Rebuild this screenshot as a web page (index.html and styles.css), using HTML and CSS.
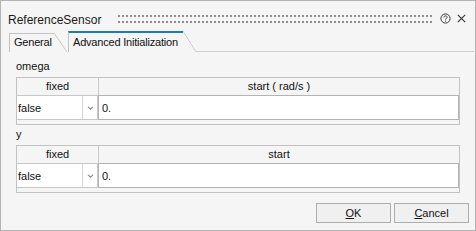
FILE: index.html
```html
<!DOCTYPE html>
<html>
<head>
<meta charset="utf-8">
<link rel="stylesheet" href="styles.css">
</head>
<body>
<div class="window">
  <div class="titlebar">
    <span class="title">ReferenceSensor</span>
    <span class="grip"></span>
    <svg class="help" width="11" height="11" viewBox="0 0 11 11"><circle cx="5.5" cy="5.5" r="4.6" fill="none" stroke="#3a3a3a" stroke-width="1"/><path d="M3.9 4.4 C3.9 3.4 4.6 2.9 5.5 2.9 C6.4 2.9 7.1 3.4 7.1 4.3 C7.1 5.3 5.6 5.4 5.6 6.7" fill="none" stroke="#3a3a3a" stroke-width="1"/><rect x="5.1" y="7.6" width="1" height="1" fill="#3a3a3a"/></svg>
    <svg class="close" width="9" height="9" viewBox="0 0 9 9"><path d="M0.8 0.8 L8.2 8.2 M8.2 0.8 L0.8 8.2" stroke="#333" stroke-width="1.1"/></svg>
  </div>
  <div class="tabbar">
    <div class="tab tab-general">General</div>
    <div class="tab tab-active">Advanced Initialization</div>
    <div class="tabfill"></div>
  </div>
  <div class="pane">
    <div class="group">
      <div class="label">omega</div>
      <div class="grid">
        <div class="thead">
          <div class="th th1">fixed</div>
          <div class="th th2">start ( rad/s )</div>
        </div>
        <div class="trow">
          <div class="combo">
            <div class="combo-text">false</div>
            <div class="combo-arrow"><svg width="7" height="4" viewBox="0 0 7 4"><polyline points="1,0.8 3.5,3.2 6,0.8" fill="none" stroke="#8a8a8a" stroke-width="1.1"/></svg></div>
          </div>
          <div class="edit">0.</div>
        </div>
      </div>
    </div>
    <div class="group group-second">
      <div class="label">y</div>
      <div class="grid">
        <div class="thead">
          <div class="th th1">fixed</div>
          <div class="th th2">start</div>
        </div>
        <div class="trow">
          <div class="combo">
            <div class="combo-text">false</div>
            <div class="combo-arrow"><svg width="7" height="4" viewBox="0 0 7 4"><polyline points="1,0.8 3.5,3.2 6,0.8" fill="none" stroke="#8a8a8a" stroke-width="1.1"/></svg></div>
          </div>
          <div class="edit">0.</div>
        </div>
      </div>
    </div>
  </div>
  <div class="buttons">
    <button class="btn"><u>O</u>K</button>
    <button class="btn"><u>C</u>ancel</button>
  </div>
</div>
</body>
</html>
```

FILE: styles.css
```css
* { box-sizing: border-box; }
html, body { margin: 0; padding: 0; }
body {
  background: #f5f5f5;
  font-family: "Liberation Sans", Arial, sans-serif;
  font-size: 11px;
  color: #111;
}
.window {
  width: 476px;
  height: 231px;
  border: 1px solid #b4b4b4;
  background: #f5f5f5;
  display: flex;
  flex-direction: column;
}
.titlebar {
  height: 30px;
  display: flex;
  align-items: flex-start;
  padding: 11px 9px 0 7px;
}
.title {
  font-size: 12px;
  line-height: 16px;
  color: #1a1a1a;
}
.grip {
  flex: 1;
  height: 8px;
  margin: 3px 8px 0 17px;
  background-image: conic-gradient(from 270deg at 2px 2px, #8e8e8e 25%, transparent 0);
  background-size: 4px 6px;
}
.help { margin-top: 1px; flex: none; }
.close { margin: 2px 0 0 6px; flex: none; }

.tabbar {
  height: 21px;
  display: flex;
  align-items: flex-end;
  padding-left: 8px;
}
.tab {
  position: relative;
  display: flex;
  align-items: flex-end;
  padding: 0 0 3px 4px;
  line-height: 13px;
  border-left: 1px solid #c3c3c3;
  border-top: 1px solid #c3c3c3;
  letter-spacing: -0.2px;
  white-space: nowrap;
  color: #111;
}
.tab::after {
  content: "";
  position: absolute;
  top: -1px;
  right: -13px;
  width: 13px;
  bottom: 0;
  background: linear-gradient(to top right, transparent calc(50% - 0.7px), #c3c3c3 50%, transparent calc(50% + 0.7px));
}
.tab-general {
  height: 19px;
  width: 45px;
  margin-right: 14px;
}
.tab-active {
  height: 21px;
  width: 115px;
  border-top: 2px solid #1b7db2;
  margin-right: 13px;
}
.tab-active::after { top: -2px; }
.tabfill {
  flex: 1;
  height: 1px;
  background: #cdcdcd;
  margin-right: 1px;
}

.pane {
  padding: 7px 15px 0 15px;
}
.label {
  height: 18px;
  line-height: 15px;
}
.group-second { margin-top: 2px; }
.grid {
  width: 444px;
  height: 48px;
  border: 1px solid #c2c2c2;
}
.thead {
  display: flex;
  height: 17px;
  line-height: 17px;
}
.th { text-align: center; }
.th1 { width: 82px; border-right: 1px solid #cacaca; }
.th2 { flex: 1; }
.trow {
  display: flex;
  height: 25px;
}
.combo {
  width: 81px;
  display: flex;
  background: #fff;
  border: 1px solid #c8c8c8;
  border-left: none;
}
.combo-text {
  width: 66px;
  border-right: 1px solid #d4d4d4;
  padding-left: 1px;
  display: flex;
  align-items: center;
}
.combo-arrow {
  flex: 1;
  display: flex;
  align-items: center;
  justify-content: center;
}
.edit {
  flex: 1;
  background: #fff;
  border: 1px solid #b4b4b4;
  padding-left: 3px;
  display: flex;
  align-items: center;
}

.buttons {
  display: flex;
  justify-content: flex-end;
  gap: 3px;
  padding-right: 6px;
  margin-top: 10px;
}
.btn {
  width: 75px;
  height: 20px;
  border: 1px solid #adadad;
  background: #f0f0f0;
  font-family: "Liberation Sans", Arial, sans-serif;
  font-size: 11px;
  line-height: 13px;
  color: #111;
  padding: 0;
  display: flex;
  align-items: center;
  justify-content: center;
}
```
